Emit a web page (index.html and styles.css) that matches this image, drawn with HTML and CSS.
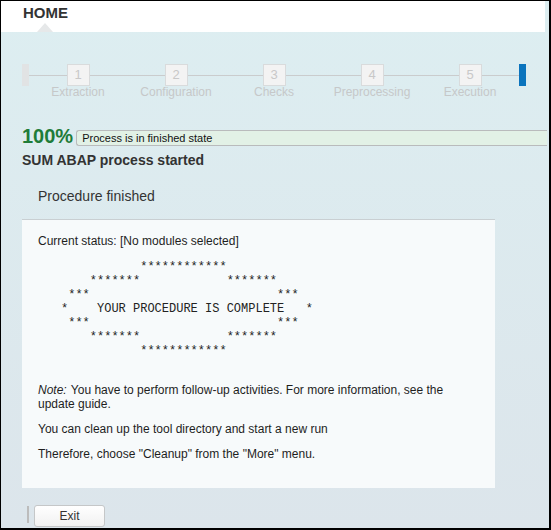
FILE: index.html
```html
<!DOCTYPE html>
<html lang="en">
<head>
    <meta charset="UTF-8">
    <title>SUM ABAP - Home</title>
    <link rel="stylesheet" href="styles.css">
</head>
<body>
    <div class="frame">
        <div class="header">
            <h1>HOME</h1>
            <span class="tab-arrow"></span>
        </div>

        <div class="main">
            <div class="roadmap">
                <span class="roadmap-end"></span>
                <div class="roadmap-track">
                    <div class="step">
                        <div class="step-box">1</div>
                        <div class="step-label">Extraction</div>
                    </div>
                    <div class="step">
                        <div class="step-box">2</div>
                        <div class="step-label">Configuration</div>
                    </div>
                    <div class="step">
                        <div class="step-box">3</div>
                        <div class="step-label">Checks</div>
                    </div>
                    <div class="step">
                        <div class="step-box">4</div>
                        <div class="step-label">Preprocessing</div>
                    </div>
                    <div class="step">
                        <div class="step-box">5</div>
                        <div class="step-label">Execution</div>
                    </div>
                </div>
                <span class="roadmap-end roadmap-end-active"></span>
            </div>

            <div class="progress">
                <span class="progress-value">100%</span>
                <div class="progress-bar">Process is in finished state</div>
            </div>

            <h2 class="process-title">SUM ABAP process started</h2>
            <h3 class="phase-title">Procedure finished</h3>

            <div class="panel">
                <p>Current status: [No modules selected]</p>
<pre class="banner">           ************
    *******            *******
 ***                          ***
*    YOUR PROCEDURE IS COMPLETE   *
 ***                          ***
    *******            *******
           ************</pre>
                <p class="note"><em>Note:</em> You have to perform follow-up activities. For more information, see the update guide.</p>
                <p>You can clean up the tool directory and start a new run</p>
                <p>Therefore, choose "Cleanup" from the "More" menu.</p>
            </div>

            <div class="actions">
                <span class="actions-sep"></span>
                <button class="btn">Exit</button>
            </div>
        </div>
    </div>
</body>
</html>
```

FILE: styles.css
```css
* {
    margin: 0;
    padding: 0;
    box-sizing: border-box;
}

body {
    font-family: 'Liberation Sans', Arial, sans-serif;
    color: #2b2b2b;
    background: #fff;
}

.frame {
    width: 551px;
    height: 530px;
    border-style: solid;
    border-color: #000;
    border-width: 1px 2px 2px 1px;
    background: linear-gradient(#ddeef1, #dce5eb);
    overflow: hidden;
}

/* header */
.header {
    width: 544px;
    height: 31px;
    background: #fff;
    padding: 3px 0 0 22px;
}

.header h1 {
    font-size: 15px;
    line-height: 17px;
    font-weight: bold;
    color: #333;
}

.tab-arrow {
    display: block;
    width: 0;
    height: 0;
    margin: 2px 0 0 14px;
    border-left: 8px solid transparent;
    border-right: 8px solid transparent;
    border-bottom: 9px solid #e6e8e9;
}

.main {
    padding: 32px 2px 0 21px;
}

/* roadmap */
.roadmap {
    display: flex;
    align-items: flex-start;
}

.roadmap-end {
    width: 7px;
    height: 22px;
    background: #e1e3e4;
}

.roadmap-end-active {
    background: #0b74bd;
}

.roadmap-track {
    display: flex;
    background: linear-gradient(#cacccd, #cacccd) no-repeat 0 11px / 100% 1px;
}

.step {
    width: 98px;
    display: flex;
    flex-direction: column;
    align-items: center;
}

.step-box {
    width: 23px;
    height: 22px;
    border: 1px solid #d9dbdc;
    background: #f3f3f3;
    color: #c8c8c8;
    font-size: 13px;
    line-height: 20px;
    text-align: center;
}

.step-label {
    font-size: 12px;
    line-height: 13px;
    color: #c6c8c9;
    white-space: nowrap;
}

/* progress */
.progress {
    display: flex;
    align-items: flex-start;
    margin-top: 26px;
}

.progress-value {
    font-size: 20px;
    line-height: 22px;
    font-weight: bold;
    color: #1f7c39;
}

.progress-bar {
    flex: 1;
    height: 16px;
    margin: 5px 0 0 3px;
    padding-left: 5px;
    border: 1px solid #b9bbbc;
    border-right: none;
    border-radius: 3px 0 0 3px;
    background: #e2f1e6;
    font-size: 11px;
    line-height: 14px;
    color: #111;
}

.process-title {
    margin-top: 5px;
    font-size: 14px;
    line-height: 17px;
    font-weight: bold;
    color: #333;
}

.phase-title {
    margin: 19px 0 0 16px;
    font-size: 14px;
    line-height: 17px;
    font-weight: normal;
    color: #333;
}

/* result panel */
.panel {
    width: 473px;
    margin-top: 14px;
    padding: 14px 50px 27px 16px;
    border-top: 1px solid #c9cfd2;
    background: #f7fafb;
    font-size: 12px;
    line-height: 14px;
    color: #1e1e1e;
}

.panel p {
    margin-top: 11px;
}

.panel p:first-child {
    margin-top: 0;
}

.panel p.note {
    margin-top: 25px;
}

.panel em {
    margin-right: 1px;
}

.banner {
    margin: 12px 0 0 23px;
    font-family: 'Liberation Mono', 'Courier New', monospace;
    font-size: 12px;
    line-height: 14px;
    color: #222;
}

/* footer buttons */
.actions {
    display: flex;
    align-items: flex-start;
    margin-top: 17px;
}

.actions-sep {
    width: 2px;
    height: 17px;
    margin: 1px 0 0 5px;
    background: #bcbcbc;
}

.btn {
    width: 71px;
    height: 22px;
    margin-left: 5px;
    border: 1px solid #c5c7c8;
    border-radius: 3px;
    background: linear-gradient(#ffffff, #f1f1f1);
    font-family: 'Liberation Sans', Arial, sans-serif;
    font-size: 12px;
    color: #333;
}
```
